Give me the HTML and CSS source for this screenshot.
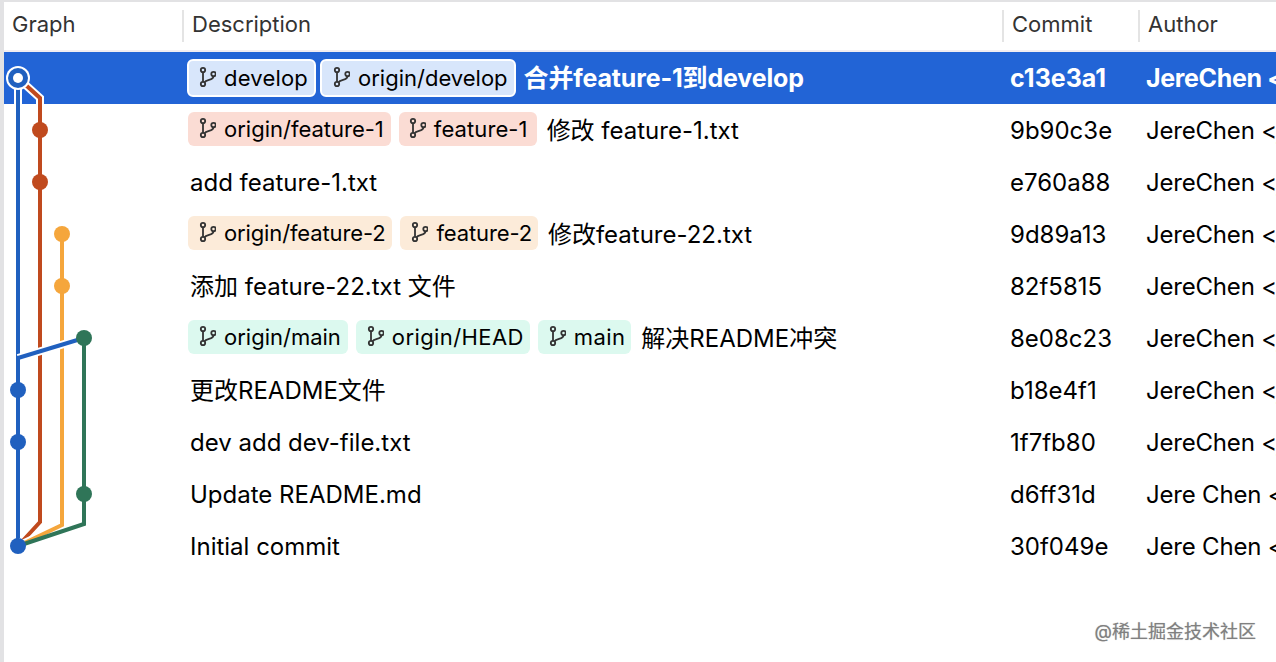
FILE: index.html
```html
<!DOCTYPE html>
<html lang="zh">
<head>
<meta charset="utf-8">
<title>Git Graph</title>
<link rel="stylesheet" href="styles.css">
</head>
<body>
<svg class="defs" width="0" height="0"><symbol id="br" viewBox="0 0 18 24"><g fill="none" stroke="currentColor" stroke-width="1.8"><circle cx="5" cy="4" r="2.2"/><circle cx="5" cy="18" r="2.2"/><circle cx="15.5" cy="8" r="2.2"/><path d="M5 6.2V15.8M15.5 10.2C15.5 14.5 8 13 6.6 16.4"/></g></symbol></svg>
<main class="app">
  <header class="head">
    <div class="hc">Graph</div>
    <div class="hc sep">Description</div>
    <div class="hc sep">Commit</div>
    <div class="hc sep">Author</div>
  </header>
  <section class="rows">
    <svg class="graph" width="100" height="520" viewBox="0 52 100 520">
      <g fill="none" stroke-linejoin="miter">
        <path class="halo" d="M18 78V546"/>
        <path class="ln blue" d="M18 78V546"/>
        <path class="halo" d="M18 78L40 98V522L18 546"/>
        <path class="ln red" d="M18 78L40 98V522L18 546"/>
        <path class="halo" d="M62 234V525L18 546"/>
        <path class="ln amber" d="M62 234V525L18 546"/>
        <path class="ln green" d="M84 338V524L18 546"/>
        <path class="halo" d="M18 358L84 338"/>
        <path class="ln blue" d="M18 358L84 338"/>
        <path class="ln blue" d="M18 356V390"/>
      </g>
      <circle cx="18" cy="78" r="12" fill="#fff"/>
      <circle cx="18" cy="78" r="10" fill="#2060bf"/>
      <circle cx="18" cy="78" r="5" fill="#fff"/>
      <circle class="red-f" cx="40" cy="130" r="8"/>
      <circle class="red-f" cx="40" cy="182" r="8"/>
      <circle class="amber-f" cx="62" cy="234" r="8"/>
      <circle class="amber-f" cx="62" cy="286" r="8"/>
      <circle class="green-f" cx="84" cy="338" r="8"/>
      <circle class="blue-f" cx="18" cy="390" r="8"/>
      <circle class="blue-f" cx="18" cy="442" r="8"/>
      <circle class="green-f" cx="84" cy="494" r="8"/>
      <circle class="blue-f" cx="18" cy="546" r="8"/>
    </svg>

    <div class="row sel">
      <div class="c"></div>
      <div class="c desc"><span class="tag b"><svg class="ic"><use href="#br"/></svg>develop</span><span class="tag b"><svg class="ic"><use href="#br"/></svg>origin/develop</span><span class="msg">合并feature-1到develop</span></div>
      <div class="c">c13e3a1</div>
      <div class="c">JereChen &lt;jerechen@example.com&gt;</div>
    </div>
    <div class="row">
      <div class="c"></div>
      <div class="c desc"><span class="tag r"><svg class="ic"><use href="#br"/></svg>origin/feature-1</span><span class="tag r"><svg class="ic"><use href="#br"/></svg>feature-1</span><span class="msg">修改 feature-1.txt</span></div>
      <div class="c">9b90c3e</div>
      <div class="c">JereChen &lt;jerechen@example.com&gt;</div>
    </div>
    <div class="row">
      <div class="c"></div>
      <div class="c desc"><span class="plain">add feature-1.txt</span></div>
      <div class="c">e760a88</div>
      <div class="c">JereChen &lt;jerechen@example.com&gt;</div>
    </div>
    <div class="row">
      <div class="c"></div>
      <div class="c desc"><span class="tag o"><svg class="ic"><use href="#br"/></svg>origin/feature-2</span><span class="tag o"><svg class="ic"><use href="#br"/></svg>feature-2</span><span class="msg">修改feature-22.txt</span></div>
      <div class="c">9d89a13</div>
      <div class="c">JereChen &lt;jerechen@example.com&gt;</div>
    </div>
    <div class="row">
      <div class="c"></div>
      <div class="c desc"><span class="plain">添加 feature-22.txt 文件</span></div>
      <div class="c">82f5815</div>
      <div class="c">JereChen &lt;jerechen@example.com&gt;</div>
    </div>
    <div class="row">
      <div class="c"></div>
      <div class="c desc"><span class="tag g"><svg class="ic"><use href="#br"/></svg>origin/main</span><span class="tag g"><svg class="ic"><use href="#br"/></svg>origin/HEAD</span><span class="tag g"><svg class="ic"><use href="#br"/></svg>main</span><span class="msg">解决README冲突</span></div>
      <div class="c">8e08c23</div>
      <div class="c">JereChen &lt;jerechen@example.com&gt;</div>
    </div>
    <div class="row">
      <div class="c"></div>
      <div class="c desc"><span class="plain">更改README文件</span></div>
      <div class="c">b18e4f1</div>
      <div class="c">JereChen &lt;jerechen@example.com&gt;</div>
    </div>
    <div class="row">
      <div class="c"></div>
      <div class="c desc"><span class="plain">dev add dev-file.txt</span></div>
      <div class="c">1f7fb80</div>
      <div class="c">JereChen &lt;jerechen@example.com&gt;</div>
    </div>
    <div class="row">
      <div class="c"></div>
      <div class="c desc"><span class="plain">Update README.md</span></div>
      <div class="c">d6ff31d</div>
      <div class="c">Jere Chen &lt;jerechen@example.com&gt;</div>
    </div>
    <div class="row">
      <div class="c"></div>
      <div class="c desc"><span class="plain">Initial commit</span></div>
      <div class="c">30f049e</div>
      <div class="c">Jere Chen &lt;jerechen@example.com&gt;</div>
    </div>
  </section>
</main>
<div class="mark">@稀土掘金技术社区</div>
</body>
</html>
```
FILE: styles.css
```css
* { box-sizing: border-box; }
html, body { margin: 0; height: 100%; overflow: hidden; }
html { background: #e2e2e4; }
body {
  font-family: Inter, "Noto Sans CJK SC", sans-serif;
  font-size: 24px;
  color: #000;
  padding: 2px 0 0 4px;
  background: #fff;
  position: relative;
  box-shadow: inset 4px 2px 0 #e2e2e4;
}
.defs { position: absolute; }
.app { height: 100%; }
.head {
  display: grid;
  grid-template-columns: 179px 820px 136px 1fr;
  height: 50px;
  border-bottom: 2px solid #f1edf1;
  align-items: center;
  color: #333;
  font-size: 22px;
  padding-bottom: 4px;
}
.hc { padding-left: 8px; height: 32px; line-height: 28px; margin-top: 4px; }
.sep { border-left: 2px solid #e4e4e4; padding-left: 8px; margin-left: -1px; }
.rows { position: relative; }
.graph { position: absolute; left: -4px; top: 0; z-index: 2; overflow: visible; }
.ln { stroke-width: 4; }
.halo { stroke: #fff; stroke-width: 8; }
.blue { stroke: #2060bf; }
.red { stroke: #c04a1e; }
.amber { stroke: #f5a63c; }
.green { stroke: #2f7558; }
.blue-f { fill: #2060bf; }
.red-f { fill: #c04a1e; }
.amber-f { fill: #f5a63c; }
.green-f { fill: #2f7558; }
.row {
  display: grid;
  grid-template-columns: 179px 820px 136px 1fr;
  height: 52px;
  align-items: center;
  white-space: nowrap;
  line-height: 34px;
}
.c { padding-left: 7px; padding-top: 2px; overflow: hidden; }
.c:last-child { letter-spacing: -0.2px; }
.desc { display: flex; align-items: center; overflow: visible; padding-left: 5px; padding-top: 0; }
.plain { padding-left: 2px; padding-top: 2px; }
.sel { background: #2264d6; color: #fff; font-weight: 700; font-size: 25px; }
.sel .c { padding-top: 0; }
.sel .c:last-child { letter-spacing: -0.35px; }
.tag {
  display: inline-flex;
  align-items: center;
  height: 34px;
  padding: 0 8px 0 10px;
  margin-right: 8px;
  border-radius: 6px;
  color: #000;
  font-weight: 400;
  font-size: 22px;
  line-height: 32px;
  position: relative;
  top: -1px;
}
.ic { width: 18px; height: 24px; margin-right: 8px; color: #333; flex: none; }
.sel .tag { margin-right: 4px; height: 38px; border: 2px solid #fff; padding: 0 6px 0 9px; top: 0; }
.sel .tag:first-child { margin-left: -1px; letter-spacing: 0.2px; }
.sel .tag + .tag { padding-left: 10px; }
.msg { margin-left: 2px; padding-top: 2px; }
.sel .msg { padding-top: 0; margin-left: 4px; letter-spacing: -0.15px; }
.b { background: #d8e6fb; }
.r { background: #fbdcd4; padding-right: 7px; }
.r + .r { letter-spacing: 0.1px; padding: 0 9px 0 9px; }
.o { background: #fcebd9; letter-spacing: -0.13px; padding-right: 7px; }
.o + .o { padding-right: 6px; }
.g { background: #dcf9ef; padding-right: 7px; }
.g + .g { letter-spacing: 0.4px; padding-right: 6px; }
.mark {
  position: absolute;
  right: 20px;
  bottom: 18px;
  font-size: 18px;
  line-height: 24px;
  color: #808080;
  text-shadow: 0 0 1px rgba(0, 0, 0, 0.3);
}
```
